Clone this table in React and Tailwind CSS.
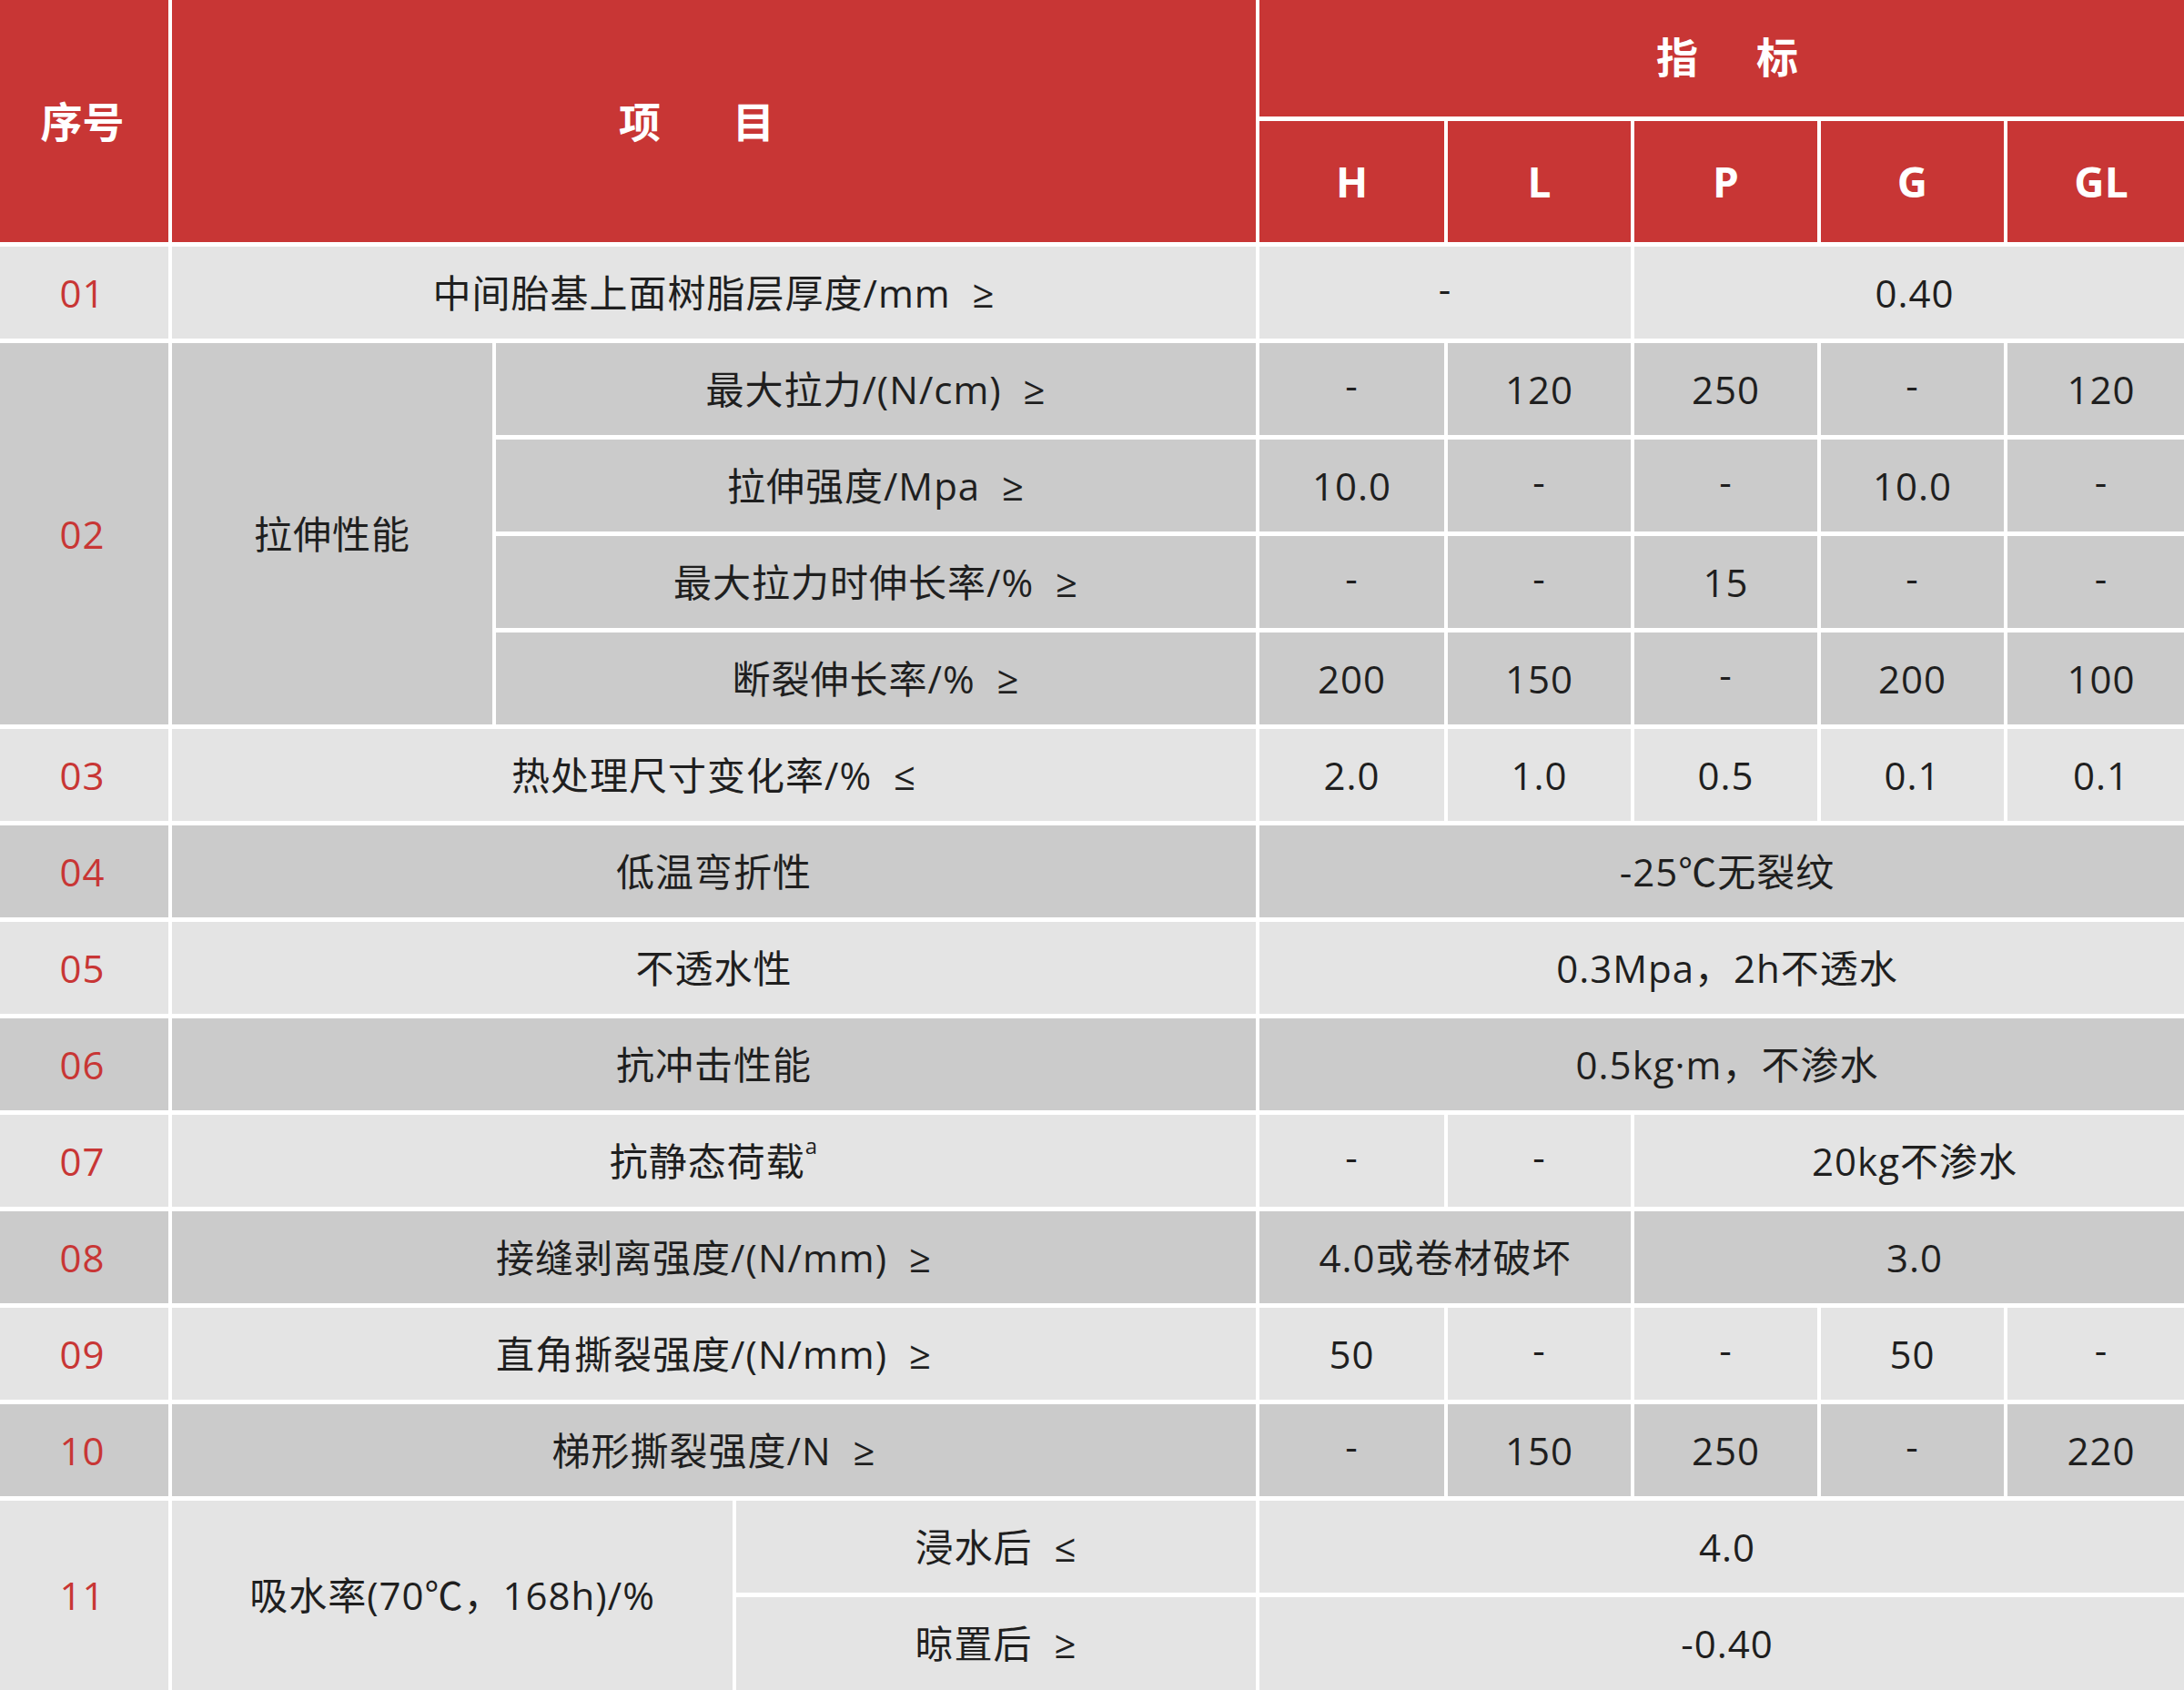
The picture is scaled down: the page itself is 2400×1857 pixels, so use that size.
import React from "react";

const LIGHT = "bg-[#e4e4e4]";
const DARK = "bg-[#cbcbcb]";

const rowStart = {
  3: "row-start-3",
  4: "row-start-4",
  5: "row-start-5",
  6: "row-start-6",
  7: "row-start-7",
  8: "row-start-8",
  9: "row-start-9",
  10: "row-start-10",
  11: "row-start-11",
  12: "row-start-12",
  13: "row-start-13",
  14: "row-start-14",
  15: "row-start-15",
  16: "row-start-16",
  17: "row-start-17",
};

const valCols = [
  "col-start-5",
  "col-start-6",
  "col-start-7",
  "col-start-8",
  "col-start-9",
];

const Cell = ({ className, tone, children }) => (
  <div
    className={`flex items-center justify-center whitespace-pre text-[42px] leading-none tracking-[1px] text-[#1f1f1f] ${tone} ${className}`}
  >
    {children === "-" ? <span className="relative -top-[5px]">-</span> : children}
  </div>
);

const No = ({ className, tone, children }) => (
  <Cell className={`col-start-1 pr-[4px] text-[#c83635] ${className}`} tone={tone}>
    {children}
  </Cell>
);

// simple rows: number, item spanning cols 2-4, five values
const ValueRow = ({ row, no, item, values, tone }) => (
  <>
    <No className={rowStart[row]} tone={tone}>
      {no}
    </No>
    <Cell className={`col-start-2 col-span-3 ${rowStart[row]}`} tone={tone}>
      {item}
    </Cell>
    {values.map((v, i) => (
      <Cell key={i} className={`${valCols[i]} ${rowStart[row]}`} tone={tone}>
        {v}
      </Cell>
    ))}
  </>
);

const WideRow = ({ row, no, item, value, tone }) => (
  <>
    <No className={rowStart[row]} tone={tone}>
      {no}
    </No>
    <Cell className={`col-start-2 col-span-3 ${rowStart[row]}`} tone={tone}>
      {item}
    </Cell>
    <Cell className={`col-start-5 col-span-5 ${rowStart[row]}`} tone={tone}>
      {value}
    </Cell>
  </>
);

const stretch = [
  { item: "最大拉力/(N/cm)  ≥", values: ["-", "120", "250", "-", "120"] },
  { item: "拉伸强度/Mpa  ≥", values: ["10.0", "-", "-", "10.0", "-"] },
  { item: "最大拉力时伸长率/%  ≥", values: ["-", "-", "15", "-", "-"] },
  { item: "断裂伸长率/%  ≥", values: ["200", "150", "-", "200", "100"] },
];

const App = () => {
  return (
    <div className="w-[2400px] h-[1857px] overflow-hidden bg-white font-['Open_Sans','Noto_Sans_CJK_SC',sans-serif]">
      <div className="grid w-[2412px] grid-cols-[185px_352px_260px_571px_203px_201px_201px_201px_206px] grid-rows-[128px_133px_repeat(14,101px)_102px] gap-x-[4px] gap-y-[5px]">
        {/* Header */}
        <div className="col-start-1 row-start-1 row-span-2 flex items-center justify-center pr-[4px] bg-[#c83635] text-[46px] font-bold text-white">
          序号
        </div>
        <div className="col-start-2 col-span-3 row-start-1 row-span-2 flex items-center justify-center gap-[79px] pr-[38px] bg-[#c83635] text-[46px] font-bold text-white">
          <span>项</span>
          <span>目</span>
        </div>
        <div className="col-start-5 col-span-5 row-start-1 flex items-center justify-center gap-[64px] pb-[4px] bg-[#c83635] text-[46px] font-bold text-white">
          <span>指</span>
          <span>标</span>
        </div>
        {["H", "L", "P", "G", "GL"].map((h, i) => (
          <div
            key={h}
            className={`${valCols[i]} row-start-2 flex items-center justify-center bg-[#c83635] text-[46px] font-bold text-white`}
          >
            {h}
          </div>
        ))}

        {/* 01 */}
        <No className="row-start-3" tone={LIGHT}>
          01
        </No>
        <Cell className="col-start-2 col-span-3 row-start-3" tone={LIGHT}>
          中间胎基上面树脂层厚度/mm  ≥
        </Cell>
        <Cell className="col-start-5 col-span-2 row-start-3" tone={LIGHT}>
          -
        </Cell>
        <Cell className="col-start-7 col-span-3 row-start-3" tone={LIGHT}>
          0.40
        </Cell>

        {/* 02 */}
        <No className="row-start-4 row-span-4" tone={DARK}>
          02
        </No>
        <Cell className="col-start-2 row-start-4 row-span-4" tone={DARK}>
          拉伸性能
        </Cell>
        {stretch.map((s, r) => (
          <React.Fragment key={s.item}>
            <Cell className={`col-start-3 col-span-2 ${rowStart[4 + r]}`} tone={DARK}>
              {s.item}
            </Cell>
            {s.values.map((v, i) => (
              <Cell key={i} className={`${valCols[i]} ${rowStart[4 + r]}`} tone={DARK}>
                {v}
              </Cell>
            ))}
          </React.Fragment>
        ))}

        <ValueRow
          row={8}
          no="03"
          item="热处理尺寸变化率/%  ≤"
          values={["2.0", "1.0", "0.5", "0.1", "0.1"]}
          tone={LIGHT}
        />
        <WideRow row={9} no="04" item="低温弯折性" value="-25℃无裂纹" tone={DARK} />
        <WideRow row={10} no="05" item="不透水性" value="0.3Mpa，2h不透水" tone={LIGHT} />
        <WideRow row={11} no="06" item="抗冲击性能" value="0.5kg·m，不渗水" tone={DARK} />

        {/* 07 */}
        <No className="row-start-12" tone={LIGHT}>
          07
        </No>
        <Cell className="col-start-2 col-span-3 row-start-12" tone={LIGHT}>
          <span className="inline-flex items-start">
            抗静态荷载
            <span className="-mt-[8px] text-[24px] leading-none">a</span>
          </span>
        </Cell>
        <Cell className="col-start-5 row-start-12" tone={LIGHT}>
          -
        </Cell>
        <Cell className="col-start-6 row-start-12" tone={LIGHT}>
          -
        </Cell>
        <Cell className="col-start-7 col-span-3 row-start-12" tone={LIGHT}>
          20kg不渗水
        </Cell>

        {/* 08 */}
        <No className="row-start-13" tone={DARK}>
          08
        </No>
        <Cell className="col-start-2 col-span-3 row-start-13" tone={DARK}>
          接缝剥离强度/(N/mm)  ≥
        </Cell>
        <Cell className="col-start-5 col-span-2 row-start-13" tone={DARK}>
          4.0或卷材破坏
        </Cell>
        <Cell className="col-start-7 col-span-3 row-start-13" tone={DARK}>
          3.0
        </Cell>

        <ValueRow
          row={14}
          no="09"
          item="直角撕裂强度/(N/mm)  ≥"
          values={["50", "-", "-", "50", "-"]}
          tone={LIGHT}
        />
        <ValueRow
          row={15}
          no="10"
          item="梯形撕裂强度/N  ≥"
          values={["-", "150", "250", "-", "220"]}
          tone={DARK}
        />

        {/* 11 */}
        <No className="row-start-16 row-span-2" tone={LIGHT}>
          11
        </No>
        <Cell className="col-start-2 col-span-2 row-start-16 row-span-2" tone={LIGHT}>
          吸水率(70℃，168h)/%
        </Cell>
        <Cell className="col-start-4 row-start-16" tone={LIGHT}>
          浸水后  ≤
        </Cell>
        <Cell className="col-start-5 col-span-5 row-start-16" tone={LIGHT}>
          4.0
        </Cell>
        <Cell className="col-start-4 row-start-17" tone={LIGHT}>
          晾置后  ≥
        </Cell>
        <Cell className="col-start-5 col-span-5 row-start-17" tone={LIGHT}>
          -0.40
        </Cell>
      </div>
    </div>
  );
};

export default App;
